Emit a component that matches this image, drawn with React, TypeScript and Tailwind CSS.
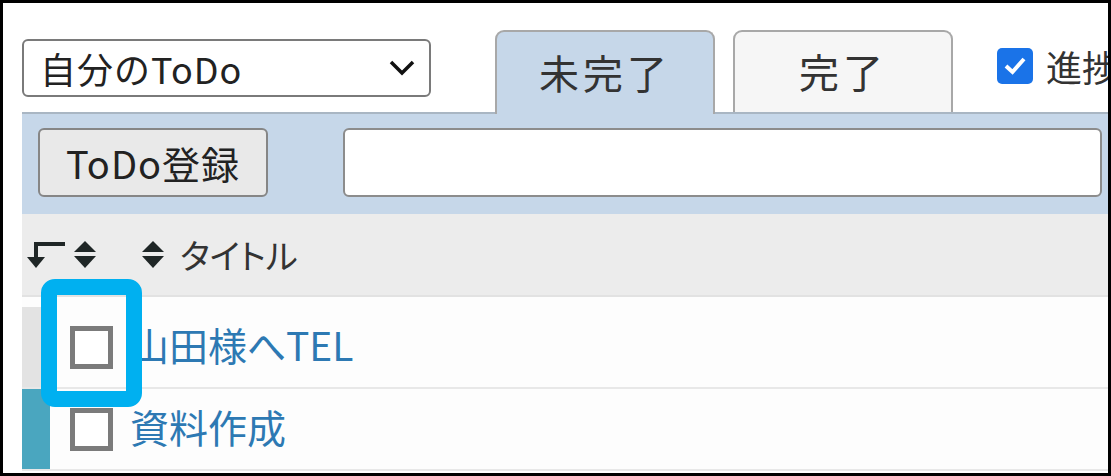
import { useState } from "react";

// ソートアイコン（上下の三角）
const SortBoth = () => (
	<svg width="24" height="29" viewBox="0 0 24 29">
		<path d="M12 1 L23 12 L1 12 Z" fill="#1f2626" />
		<path d="M1 16 L23 16 L12 28 Z" fill="#1f2626" />
	</svg>
);

// 並び替えの矢印
const SortArrow = () => (
	<svg width="40" height="28" viewBox="0 0 40 28">
		<path d="M9 3 H38" stroke="#1f2626" strokeWidth="4" fill="none" />
		<path d="M9 1 V18" stroke="#1f2626" strokeWidth="4" fill="none" />
		<path d="M0 16 L18 16 L9 27 Z" fill="#1f2626" />
	</svg>
);

const Chevron = () => (
	<svg width="26" height="18" viewBox="0 0 26 18">
		<path d="M2 3 L13 14 L24 3" stroke="#111" strokeWidth="3.5" fill="none" />
	</svg>
);

const TodoRow = ({ title, marker }: { title: string; marker: string }) => {
	return (
		<div className="flex h-[82px] items-center border-b-2 border-[#e8e8e8] bg-[#fdfdfd]">
			<div className={`h-full w-[28px] shrink-0 ${marker}`}></div>
			<div className="ml-[20px] h-[43px] w-[43px] shrink-0 border-[5px] border-[#7b7b7b] bg-white"></div>
			<span className="ml-[17px] -mt-[6px] text-[39px] leading-none text-[#2d79b3]">{title}</span>
		</div>
	);
};

export default function App() {
	const [tab, setTab] = useState("open");

	return (
		<div
			className="relative h-[476px] w-[1111px] overflow-hidden border-[3px] border-black bg-white"
			style={{ fontFamily: '"Noto Sans CJK JP", "Noto Sans", sans-serif' }}
		>
			<div className="pl-[19px]">
				{/* 上部：セレクトとタブ */}
				<div className="flex h-[109px] items-start">
					<div className="mt-[36px] flex h-[58px] w-[409px] shrink-0 items-center justify-between rounded-[6px] border-2 border-[#7a7a7a] bg-white pl-[16px] pr-[14px]">
						<span className="text-[36px] leading-none tracking-[1px] text-[#222]">自分のToDo</span>
						<Chevron />
					</div>
					<button
						className="relative z-10 ml-[64px] mt-[27px] flex h-[84px] w-[220px] shrink-0 items-center justify-center rounded-t-[9px] border-2 border-b-0 border-[#a8a8a8] bg-[#c6d7e9] pb-[2px] text-[40px] leading-none tracking-[4px] text-[#333]"
						onClick={() => setTab("open")}
					>
						未完了
					</button>
					<button
						className="ml-[18px] mt-[27px] flex h-[82px] w-[220px] shrink-0 items-center justify-center rounded-t-[9px] border-2 border-b-0 border-[#a8a8a8] bg-[#f6f6f6] pb-[2px] text-[40px] leading-none tracking-[4px] text-[#333]"
						onClick={() => setTab("done")}
					>
						完了
					</button>
					<div className="ml-[44px] mt-[45px] flex shrink-0 items-center whitespace-nowrap">
						<div className="flex h-[36px] w-[36px] shrink-0 items-center justify-center rounded-[5px] bg-[#1a73e8]">
							<svg width="24" height="20" viewBox="0 0 24 20">
								<path d="M3 10 L9.5 16 L21 3" stroke="#fff" strokeWidth="4" fill="none" />
							</svg>
						</div>
						<span className="ml-[13px] text-[36px] leading-none text-[#333]">進捗</span>
					</div>
				</div>

				{/* 登録バー */}
				<div className="flex h-[102px] items-start border-t-2 border-[#a9b6c3] bg-[#c6d7e9] pl-[16px] pr-[6px]">
					<button className="mt-[14px] flex h-[69px] w-[230px] shrink-0 items-center justify-center rounded-[6px] border-2 border-[#868686] bg-[#e9e9e9] text-[38px] leading-none tracking-[1px] text-[#222]">
						ToDo登録
					</button>
					<input
						className="ml-[75px] mt-[14px] h-[69px] min-w-0 flex-1 rounded-[6px] border-2 border-[#8c8c8c] bg-white"
						type="text"
					/>
				</div>

				{/* 一覧ヘッダー */}
				<div className="flex h-[83px] items-center border-b-2 border-[#e2e2e2] bg-[#ececec] pl-[5px]">
					<SortArrow />
					<div className="ml-[6px]">
						<SortBoth />
					</div>
					<div className="ml-[44px]">
						<SortBoth />
					</div>
					<span className="ml-[15px] text-[34px] leading-none text-[#333] [font-feature-settings:'palt']">
						タイトル
					</span>
				</div>

				<div className="h-[10px] bg-[#fdfdfd]"></div>
				<TodoRow title="山田様へTEL" marker="bg-[#e3e3e3]" />
				<TodoRow title="資料作成" marker="bg-[#4aa6bf]" />
			</div>

			{/* 注目枠 */}
			<div className="absolute left-[38px] top-[276px] h-[128px] w-[101px] rounded-[14px] border-[16px] border-[#00b0f0]"></div>
			<span className="hidden">{tab}</span>
		</div>
	);
}
